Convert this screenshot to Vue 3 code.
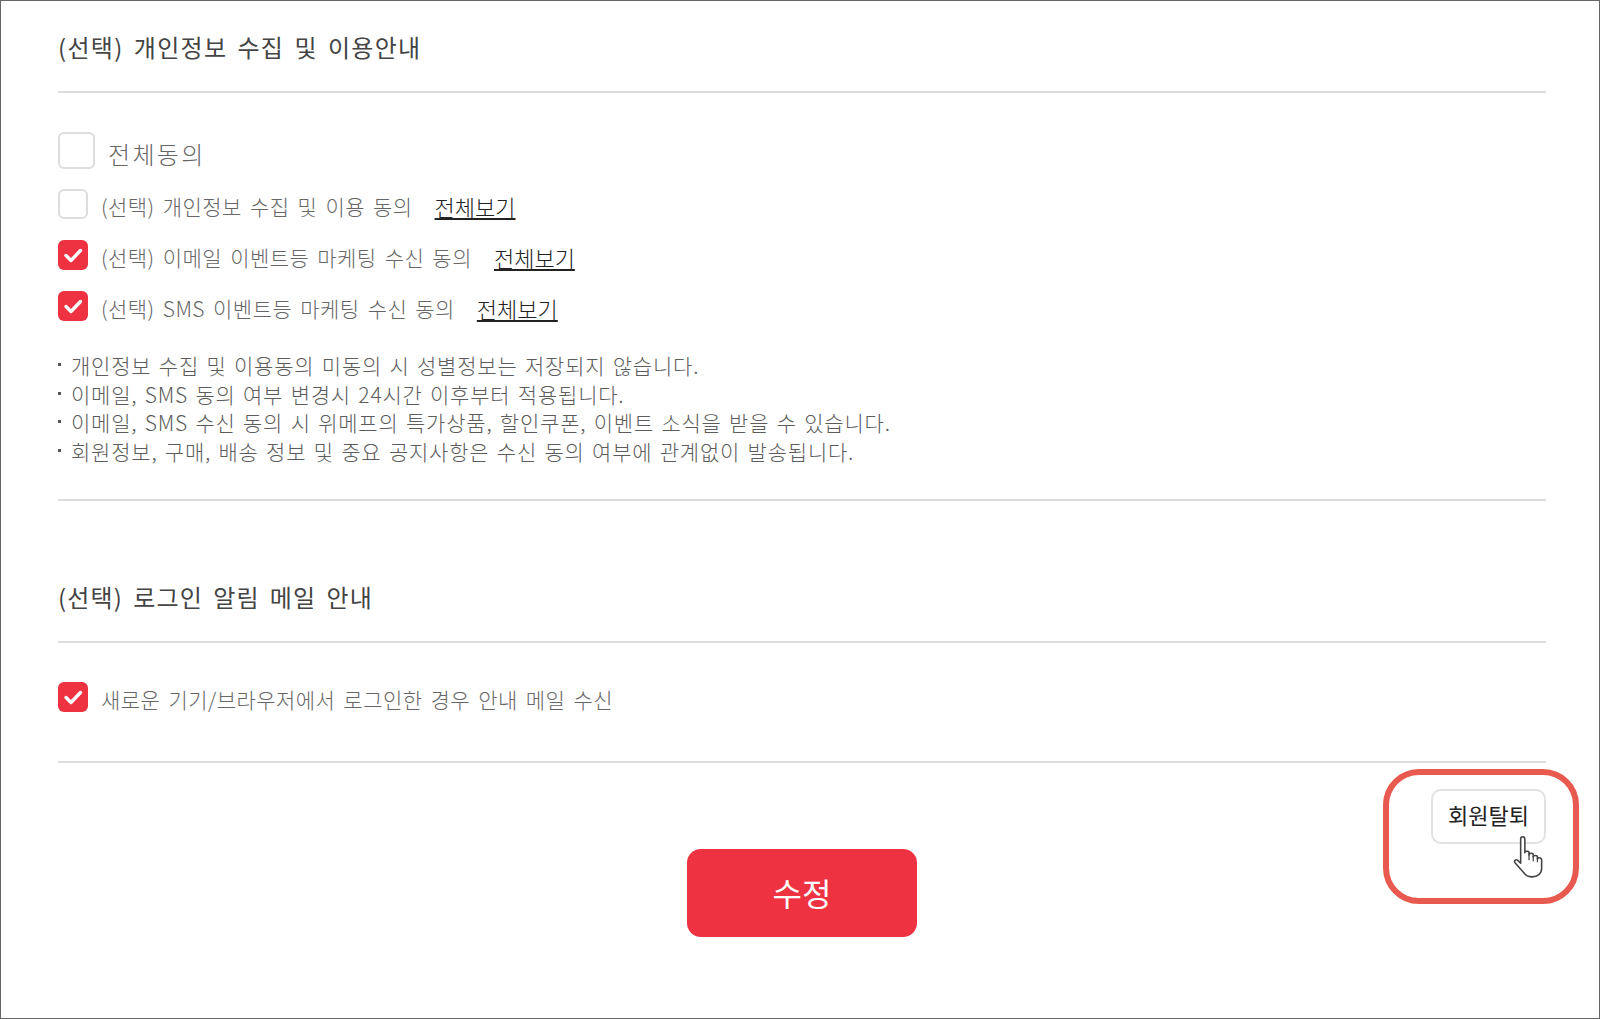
<script setup>
const rows = [
  { label: '(선택) 개인정보 수집 및 이용 동의', checked: false },
  { label: '(선택) 이메일 이벤트등 마케팅 수신 동의', checked: true },
  { label: '(선택) SMS 이벤트등 마케팅 수신 동의', checked: true },
]
const notes = [
  '개인정보 수집 및 이용동의 미동의 시 성별정보는 저장되지 않습니다.',
  '이메일, SMS 동의 여부 변경시 24시간 이후부터 적용됩니다.',
  '이메일, SMS 수신 동의 시 위메프의 특가상품, 할인쿠폰, 이벤트 소식을 받을 수 있습니다.',
  '회원정보, 구매, 배송 정보 및 중요 공지사항은 수신 동의 여부에 관계없이 발송됩니다.',
]
</script>

<template>
  <div class="page">
    <h2 class="title first">(선택) 개인정보 수집 및 이용안내</h2>
    <div class="all">
      <span class="box big"></span>
      <span class="all-label">전체동의</span>
    </div>
    <div v-for="row in rows" :key="row.label" class="row">
      <span class="box" :class="{ on: row.checked }">
        <svg v-if="row.checked" viewBox="0 0 30 30" width="30" height="30">
          <path d="M8 15.500l5 5 9.500-10" fill="none" stroke="#fff" stroke-width="3.400" stroke-linecap="round" stroke-linejoin="round" />
        </svg>
      </span>
      <span class="label">{{ row.label }}</span>
      <a class="more">전체보기</a>
    </div>
    <ul class="notes">
      <li v-for="n in notes" :key="n">{{ n }}</li>
    </ul>

    <h2 class="title second">(선택) 로그인 알림 메일 안내</h2>
    <div class="row login">
      <span class="box on">
        <svg viewBox="0 0 30 30" width="30" height="30">
          <path d="M8 15.500l5 5 9.500-10" fill="none" stroke="#fff" stroke-width="3.400" stroke-linecap="round" stroke-linejoin="round" />
        </svg>
      </span>
      <span class="label">새로운 기기/브라우저에서 로그인한 경우 안내 메일 수신</span>
    </div>

    <div class="actions">
      <button class="withdraw">회원탈퇴</button>
      <button class="submit">수정</button>
      <span class="mark"></span>
      <svg class="hand" viewBox="0 0 34 42" width="36" height="44">
        <path d="M10 4c0-3 4-3 4 0v13c0-2 4-2 4 0v2c0-2 4-2 4 0v2c0-2 4-2 4 0v2c0-2 4-1.500 4 1v8c0 5-4 8-9 8-4 0-6-1-8-4l-8-9c-2-2 0-4 2-3l3 3z" fill="#fff" stroke="#444" stroke-width="1.500" stroke-linejoin="round" />
        <path d="M18 18v6M22 20v5M26 22v4" fill="none" stroke="#444" stroke-width="1.200" />
      </svg>
    </div>
  </div>
</template>

<style>
body { margin: 0; background: #fff; }
</style>

<style scoped>
.page {
  box-sizing: border-box;
  width: 1600px;
  height: 1019px;
  border: 1px solid #666;
  padding: 0 53px 0 57px;
  overflow: hidden;
  font-family: "Noto Sans CJK KR", "Noto Sans", sans-serif;
  font-weight: 300;
  color: #666;
}
.title {
  margin: 0;
  border-bottom: 2px solid #ddd;
  font-size: 24px;
  line-height: 34px;
  font-weight: 400;
  color: #444;
  letter-spacing: 1.2px;
  word-spacing: 3.5px;
}
.title.first { padding: 29px 0 27px; letter-spacing: 1.3px; }
.title.second { margin-top: 79px; padding: 0 0 27px; }
.all {
  display: flex;
  align-items: flex-start;
  margin-top: 39px;
  height: 57px;
}
.all-label {
  margin-left: 13px;
  font-size: 24px;
  line-height: 40px;
  letter-spacing: 2.3px;
  margin-top: 2px;
}
.box {
  box-sizing: border-box;
  flex: none;
  width: 30px;
  height: 30px;
  border: 2px solid #ddd;
  border-radius: 6px;
  background: #fff;
}
.box.big { width: 37px; height: 37px; }
.box.on {
  border: 0;
  background: #ee3242;
}
.box svg { display: block; }
.row {
  display: flex;
  align-items: center;
  height: 30px;
  margin-bottom: 21px;
}
.label {
  margin-left: 13px;
  font-size: 21px;
  line-height: 30px;
  letter-spacing: 0.45px;
  word-spacing: 3px;
  position: relative;
  top: 2px;
}
.more {
  margin-left: 22px;
  font-size: 22px;
  line-height: 30px;
  font-weight: 300;
  color: #222;
  text-decoration: underline;
  position: relative;
  top: 2px;
}
.notes {
  list-style: none;
  margin: 0;
  padding: 9px 0 33px;
  border-bottom: 2px solid #ddd;
  font-size: 21px;
  line-height: 28.7px;
  letter-spacing: 0.78px;
  word-spacing: 2px;
  color: #5c5c5c;
}
.notes li { position: relative; padding-left: 13px; }
.notes li::before {
  content: "";
  position: absolute;
  left: 0;
  top: 12px;
  width: 3px;
  height: 3px;
  background: #555;
}
.login { margin: 39px 0 0; padding-bottom: 49px; height: 30px; border-bottom: 2px solid #ddd; box-sizing: content-box; }
.actions {
  position: relative;
  height: 200px;
  padding-top: 26px;
}
.withdraw {
  display: block;
  box-sizing: border-box;
  margin: 0 0 0 auto;
  padding: 0 0 4px;
  width: 115px;
  height: 55px;
  border: 2px solid #e2e2e2;
  border-radius: 10px;
  background: #fff;
  font-family: inherit;
  font-size: 22px;
  font-weight: 400;
  color: #222;
}
.submit {
  display: block;
  margin: 5px 0 0 629px;
  padding: 0 0 2px;
  width: 230px;
  height: 88px;
  border: 0;
  border-radius: 14px;
  background: #ee3242;
  font-family: inherit;
  font-size: 32px;
  font-weight: 400;
  color: #fff;
}
.mark {
  position: absolute;
  box-sizing: border-box;
  left: 1325px;
  top: 6px;
  width: 196px;
  height: 135px;
  border: 6px solid #e85a4f;
  border-radius: 36px;
}
.hand {
  position: absolute;
  left: 1452px;
  top: 72px;
}
</style>
